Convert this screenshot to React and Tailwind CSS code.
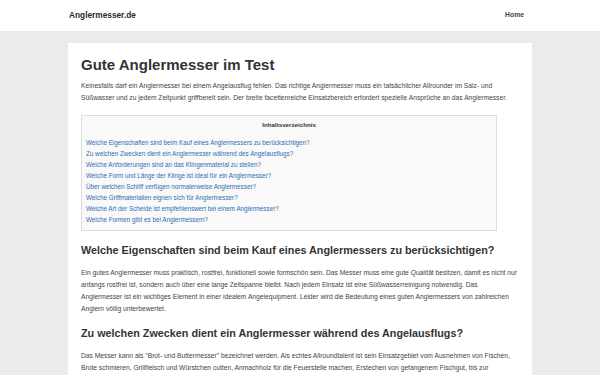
import React from 'react';

const toc = [
  'Welche Eigenschaften sind beim Kauf eines Anglermessers zu berücksichtigen?',
  'Zu welchen Zwecken dient ein Anglermesser während des Angelausflugs?',
  'Welche Anforderungen sind an das Klingenmaterial zu stellen?',
  'Welche Form und Länge der Klinge ist ideal für ein Anglermesser?',
  'Über welchen Schliff verfügen normalerweise Anglermesser?',
  'Welche Griffmaterialien eignen sich für Anglermesser?',
  'Welche Art der Scheide ist empfehlenswert bei einem Anglermesser?',
  'Welche Formen gibt es bei Anglermessern?',
];

export default function App() {
  return (
    <div className="h-screen overflow-hidden bg-[#ebebeb] text-[#333] font-['Liberation_Sans',Arial,sans-serif]">
      {/* Header */}
      <header className="bg-white h-[31px]">
        <div className="w-[464px] mx-auto h-full flex items-center justify-between pl-px">
          <span className="text-[8.3px] font-bold text-[#2a2a2a]">Anglermesser.de</span>
          <span className="text-[6.8px] font-bold text-[#444] pr-[8px]">Home</span>
        </div>
      </header>

      {/* Content */}
      <main className="pt-[12px]">
        <article className="w-[464px] mx-auto bg-white px-[13px] pt-[12px] pb-4">
          <h1 className="text-[15px] font-bold leading-[20px] text-[#333]">Gute Anglermesser im Test</h1>
          <p className="mt-[5px] text-[6.7px] leading-[12.3px] text-[#444]">
            Keinesfalls darf ein Anglermesser bei einem Angelausflug fehlen. Das richtige Anglermesser muss ein tatsächlicher Allrounder im Salz- und Süßwasser und zu jedem Zeitpunkt griffbereit sein. Der breite facettenreiche Einsatzbereich erfordert spezielle Ansprüche an das Anglermesser.
          </p>

          {/* Table of contents */}
          <div className="mt-[10px] w-[95%] border border-[#ddd] bg-[#f9f9f9] px-[4px] pt-[4px] pb-[5px]">
            <p className="text-center text-[6.2px] font-bold leading-[10px] text-[#333]">Inhaltsverzeichnis</p>
            <ul className="mt-[7px] flex flex-col">
              {toc.map((t) => (
                <li key={t} className="text-[6.3px] leading-[11.1px] text-[#2e6db4]">
                  {t}
                </li>
              ))}
            </ul>
          </div>

          <h2 className="mt-[12px] text-[10.8px] font-bold leading-[14px] text-[#333]">
            Welche Eigenschaften sind beim Kauf eines Anglermessers zu berücksichtigen?
          </h2>
          <p className="mt-[10px] text-[6.7px] leading-[11.8px] text-[#444]">
            Ein gutes Anglermesser muss praktisch, rostfrei, funktionell sowie formschön sein. Das Messer muss eine gute Qualität besitzen, damit es nicht nur anfangs rostfrei ist, sondern auch über eine lange Zeitspanne bleibt. Nach jedem Einsatz ist eine Süßwasserreinigung notwendig. Das Anglermesser ist ein wichtiges Element in einer idealem Angelequipment. Leider wird die Bedeutung eines guten Anglermessers von zahlreichen Anglern völlig unterbewertet.
          </p>

          <h2 className="mt-[11px] text-[10.8px] font-bold leading-[14px] text-[#333]">
            Zu welchen Zwecken dient ein Anglermesser während des Angelausflugs?
          </h2>
          <p className="mt-[10px] text-[6.7px] leading-[12.5px] text-[#444]">
            Das Messer kann als "Brot- und Buttermesser" bezeichnet werden. Als echtes Allroundtalent ist sein Einsatzgebiet vom Ausnehmen von Fischen, Brote schmieren, Grillfleisch und Würstchen cutten, Anmachholz für die Feuerstelle machen, Erstechen von gefangenem Fischgut, bis zur Zubereitung des Fisches.
          </p>
        </article>
      </main>
    </div>
  );
}
